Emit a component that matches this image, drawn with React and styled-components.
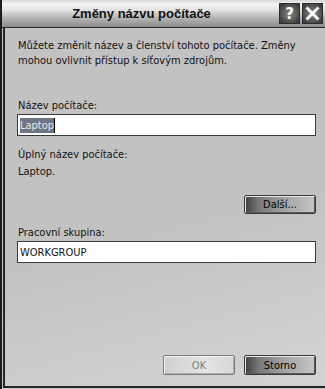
import styled, { createGlobalStyle } from "styled-components";

const GlobalStyle = createGlobalStyle`
  body {
    margin: 0;
    background: #c4c4c4;
    font-family: Tahoma, "DejaVu Sans", "Liberation Sans", sans-serif;
  }
`;

export default function App() {
  return (
    <>
      <GlobalStyle />
      <Window>
        <TitleBar>
          <Title>Změny názvu počítače</Title>
          <CaptionButton aria-label="help">?</CaptionButton>
          <CaptionButton aria-label="close">
            <svg width="15" height="15" viewBox="0 0 15 15">
              <path d="M1.5 1.5 L13.5 13.5 M13.5 1.5 L1.5 13.5" stroke="#fff" strokeWidth="2.8" />
            </svg>
          </CaptionButton>
        </TitleBar>
        <Frame>
          <Client>
            <Intro>
              Můžete změnit název a členství tohoto počítače. Změny
              <br />
              mohou ovlivnit přístup k síťovým zdrojům.
            </Intro>
            <Label $top={30}>Název počítače:</Label>
            <Field>
              <Selected>Laptop</Selected>
              <Caret />
            </Field>
            <Label $top={11}>Úplný název počítače:</Label>
            <Value>Laptop.</Value>
            <RightRow $top={16}>
              <Button $dark $h={19}>Další...</Button>
            </RightRow>
            <Label $top={11}>Pracovní skupina:</Label>
            <Field>WORKGROUP</Field>
            <Footer>
              <Button disabled>OK</Button>
              <Button $dark>Storno</Button>
            </Footer>
          </Client>
        </Frame>
      </Window>
    </>
  );
}

const Window = styled.div`
  width: 325px;
  height: 389px;
  display: flex;
  flex-direction: column;
  box-sizing: border-box;
  border-left: 2px solid #1c1c1c;
  background: #c8c8c8;
`;

const TitleBar = styled.div`
  height: 28px;
  flex: none;
  display: flex;
  align-items: center;
  gap: 2px;
  padding-right: 2px;
  box-sizing: border-box;
  border-bottom: 1px solid #2a2a2a;
  background: linear-gradient(
    to bottom,
    #d8d8d8 0px,
    #f4f4f4 4px,
    #e2e2e2 10px,
    #b4b4b4 18px,
    #8c8c8c 27px
  );
`;

const Title = styled.div`
  flex: 1;
  text-align: center;
  font-family: "Liberation Sans", Arial, sans-serif;
  font-weight: bold;
  font-size: 13px;
  color: #111;
  padding-left: 4px;
`;

const CaptionButton = styled.div`
  width: 21px;
  height: 21px;
  display: flex;
  align-items: center;
  justify-content: center;
  box-sizing: border-box;
  border: 1px solid #2c2c2c;
  background: radial-gradient(circle at 50% 50%, #8a8a8a, #3e3e3e 85%);
  color: #fff;
  font-family: "DejaVu Sans", sans-serif;
  font-weight: bold;
  font-size: 15px;
`;

const Frame = styled.div`
  flex: 1;
  display: flex;
  padding-left: 1px;
  padding-bottom: 1px;
`;

const Client = styled.div`
  flex: 1;
  display: flex;
  flex-direction: column;
  box-sizing: border-box;
  border-left: 2px solid #262626;
  border-bottom: 2px solid #262626;
  padding: 10px 9px 0 12px;
  font-family: "DejaVu Sans Condensed", "DejaVu Sans", sans-serif;
  font-size: 11px;
  color: #111;
  background: linear-gradient(165deg, #c2c2c2 55%, #d4d4d4 100%);
`;

const Intro = styled.div`
  line-height: 15px;
  padding-left: 1px;
`;

const Label = styled.div`
  margin-top: ${({ $top }) => $top}px;
  line-height: 15px;
  padding-left: 1px;
  margin-bottom: 1px;
`;

const Value = styled.div`
  line-height: 15px;
  margin-top: 1px;
  padding-left: 1px;
`;

const Field = styled.div`
  height: 22px;
  display: flex;
  align-items: center;
  box-sizing: border-box;
  border: 1px solid #3a3a3a;
  background: #fff;
  padding-left: 2px;
  font-size: 11px;
`;

const Selected = styled.span`
  background: #6d7684;
  color: #e8e8e8;
  line-height: 15px;
`;

const Caret = styled.span`
  width: 1px;
  height: 15px;
  background: #000;
`;

const RightRow = styled.div`
  display: flex;
  justify-content: flex-end;
  margin-top: ${({ $top }) => $top}px;
`;

const Footer = styled.div`
  margin-top: auto;
  margin-bottom: 11px;
  display: flex;
  justify-content: flex-end;
  gap: 9px;
`;

const Button = styled.button`
  width: 72px;
  height: ${({ $h }) => $h || 20}px;
  padding: 0;
  font-family: "DejaVu Sans Condensed", "DejaVu Sans", sans-serif;
  font-size: 11px;
  border-radius: 2px;
  border: 1px solid ${({ $dark }) => ($dark ? "#3a3a3a" : "#7a7a7a")};
  color: ${({ $dark }) => ($dark ? "#000" : "#7c7c7c")};
  background: ${({ $dark }) =>
    $dark
      ? "linear-gradient(to right, #3e3e3e 0%, #7a7a7a 20%, #a8a8a8 60%, #c4c4c4 100%)"
      : "linear-gradient(to right, #cfcfcf, #e4e4e4 60%, #d6d6d6)"};
  box-shadow: ${({ $dark }) =>
    $dark
      ? "inset 1px 1px 0 #e8e8e8, inset -1px -1px 0 #5a5a5a"
      : "inset 1px 1px 0 #f4f4f4, inset -1px -1px 0 #b0b0b0"};
`;
